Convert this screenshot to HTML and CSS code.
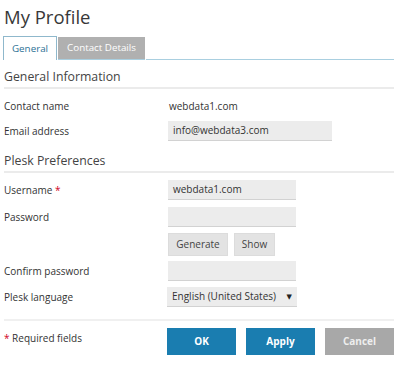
FILE: index.html
```html
<!DOCTYPE html>
<html>
<head>
<meta charset="utf-8">
<link rel="stylesheet" href="styles.css">
</head>
<body>
<div class="page">
  <h1 class="title">My Profile</h1>
  <div class="tabs">
    <div class="tab active">General</div>
    <div class="tab">Contact Details</div>
    <div class="tab-fill"></div>
  </div>

  <h2 class="section">General Information</h2>
  <div class="rows first">
    <div class="row text-row"><span class="label">Contact name</span><span class="value">webdata1.com</span></div>
    <div class="row tall"><span class="label">Email address</span><div class="input wide">info@webdata3.com</div></div>
  </div>

  <h2 class="section">Plesk Preferences</h2>
  <div class="rows second">
    <div class="row"><span class="label">Username <span class="req">*</span></span><div class="input">webdata1.com</div></div>
    <div class="row tall"><span class="label">Password</span><div class="input"></div></div>
    <div class="row btn-row"><span class="label"></span><div class="btns"><span class="btn gen">Generate</span><span class="btn show">Show</span></div></div>
    <div class="row"><span class="label">Confirm password</span><div class="input"></div></div>
    <div class="row"><span class="label">Plesk language</span><div class="input select"><span>English (United States)</span><span class="caret">&#9660;</span></div></div>
  </div>

  <div class="footer">
    <span class="required"><span class="req">*</span> Required fields</span>
    <div class="actions">
      <span class="action primary">OK</span>
      <span class="action primary">Apply</span>
      <span class="action cancel">Cancel</span>
    </div>
  </div>
</div>
</body>
</html>
```
FILE: styles.css
```css
html, body {
  margin: 0;
  padding: 0;
  background: #fff;
}
.page {
  font-family: "Open Sans", "DejaVu Sans", sans-serif;
  color: #333;
  font-size: 10px;
  padding: 0 6px 0 4px;
  width: 390px;
}
.title {
  margin: 0;
  font-weight: normal;
  font-size: 18.5px;
  line-height: 34px;
  height: 33px;
  color: #383838;
}
.tabs {
  display: flex;
  align-items: flex-end;
  height: 27px;
  margin-left: -1px;
}
.tab {
  font-size: 9.8px;
  height: 22px;
  line-height: 22px;
  padding: 0 9px;
  background: #b0b0b0;
  color: #fff;
  border-bottom: 1px solid #a9cfe0;
  margin-right: 1px;
}
.tab.active {
  background: #fff;
  color: #2b6f95;
  border: 1px solid #8fb8cc;
  border-bottom: none;
  height: 23px;
  line-height: 23px;
  padding: 0 8px;
}
.tab-fill {
  flex: 1;
  border-bottom: 1px solid #a9cfe0;
}
.section {
  margin: 0;
  font-weight: normal;
  font-size: 12.3px;
  color: #444;
  height: 27px;
  line-height: 34px;
  border-bottom: 2px solid #ebebeb;
}
.rows.first {
  padding-top: 6px;
}
.rows.second {
  padding-top: 4px;
}
.row {
  display: flex;
  align-items: center;
  height: 26px;
}
.row.tall {
  height: 27px;
}
.text-row {
  height: 22px;
}
.btn-row {
  height: 28px;
}
.label {
  width: 164px;
  flex: none;
}
.req {
  color: #d0021b;
}
.value {
  padding-left: 1px;
}
.input {
  box-sizing: border-box;
  width: 128px;
  height: 20px;
  line-height: 19px;
  background: #ececec;
  border-bottom: 1px solid #d2d2d2;
  padding: 0 5px;
  white-space: nowrap;
}
.input.wide {
  width: 164px;
}
.select {
  width: 130px;
  margin-left: -1px;
  display: flex;
  justify-content: space-between;
  padding-right: 5px;
}
.caret {
  font-size: 7px;
  color: #222;
}
.btns {
  display: flex;
  gap: 6px;
}
.btn {
  background: #e3e3e3;
  border: 1px solid #dcdcdc;
  box-sizing: border-box;
  height: 23px;
  line-height: 21px;
  text-align: center;
  color: #444;
}
.btn.gen {
  width: 60px;
}
.btn.show {
  width: 41px;
}
.footer {
  border-top: 2px solid #f0f0f0;
  margin-top: 9px;
  display: flex;
  justify-content: space-between;
  padding-top: 7px;
}
.required {
  padding-top: 3px;
}
.actions {
  display: flex;
  gap: 10px;
}
.action {
  width: 69px;
  height: 27px;
  line-height: 27px;
  text-align: center;
  color: #fff;
  font-weight: bold;
  font-size: 10px;
}
.primary {
  background: #1a7db0;
}
.cancel {
  background: #a8a8a8;
  color: #eee;
}
```
